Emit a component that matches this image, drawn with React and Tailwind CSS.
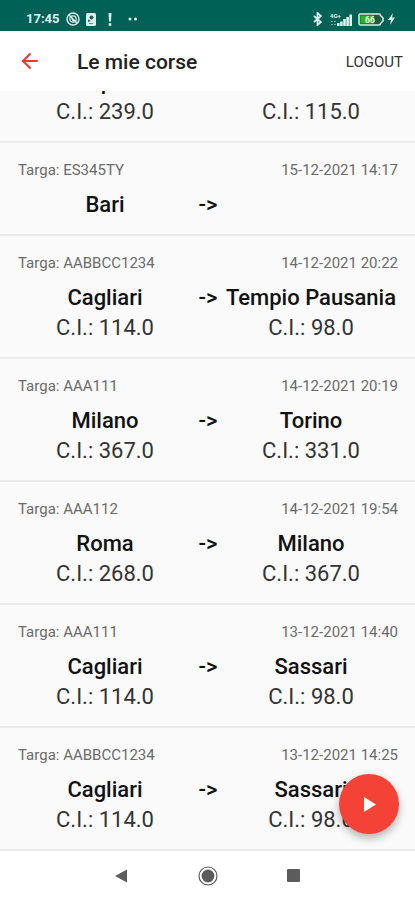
import { ArrowLeft } from "lucide-react";

const rides = [
  { id: 1, plate: "", date: "", from: "Napoli", fromKm: "239.0", to: "", toKm: "115.0" },
  { id: 2, plate: "ES345TY", date: "15-12-2021 14:17", from: "Bari", to: "" },
  { id: 3, plate: "AABBCC1234", date: "14-12-2021 20:22", from: "Cagliari", fromKm: "114.0", to: "Tempio Pausania", toKm: "98.0" },
  { id: 4, plate: "AAA111", date: "14-12-2021 20:19", from: "Milano", fromKm: "367.0", to: "Torino", toKm: "331.0" },
  { id: 5, plate: "AAA112", date: "14-12-2021 19:54", from: "Roma", fromKm: "268.0", to: "Milano", toKm: "367.0" },
  { id: 6, plate: "AAA111", date: "13-12-2021 14:40", from: "Cagliari", fromKm: "114.0", to: "Sassari", toKm: "98.0" },
  { id: 7, plate: "AABBCC1234", date: "13-12-2021 14:25", from: "Cagliari", fromKm: "114.0", to: "Sassari", toKm: "98.0" },
];

function StatusBar() {
  return (
    <div className="flex h-[31px] shrink-0 items-end justify-between bg-[#006156] pr-5 pb-1 pl-[26px] text-[#e0efed]">
      <div className="flex items-center">
        <span className="text-[13px] leading-4 font-bold">17:45</span>
        <svg className="ml-[6px] h-[14px] w-[14px]" viewBox="0 0 14 14" fill="none" stroke="currentColor">
          <circle cx="7" cy="7" r="6" strokeWidth="1.4" />
          <circle cx="7" cy="7" r="3.2" strokeWidth="1.2" />
          <path d="M3 3l8 8M5.5 5.5l2 4" strokeWidth="1.4" />
        </svg>
        <svg className="ml-[6px] h-[13px] w-[10px]" viewBox="0 0 10 13">
          <rect width="10" height="13" rx="1.5" fill="currentColor" />
          <circle cx="5.5" cy="4.5" r="2" fill="#1f5f58" />
          <path d="M2 6.5l3 1.5-3 1z" fill="#1f5f58" />
          <path d="M3 10.5h4" stroke="#5d8f89" />
        </svg>
        <svg className="ml-3 h-[13px] w-[4px]" viewBox="0 0 4 13" fill="currentColor">
          <path d="M.5 0h3L3 8.5H1z" />
          <rect x=".7" y="10.2" width="2.6" height="2.6" />
        </svg>
        <svg className="ml-4 h-[4px] w-[10px]" viewBox="0 0 10 4" fill="currentColor">
          <circle cx="2" cy="2" r="1.5" />
          <circle cx="7.5" cy="2" r="1.5" />
        </svg>
      </div>
      <div className="flex h-4 items-center">
        <svg className="h-[14px] w-[9px]" viewBox="0 0 9 14" fill="none" stroke="currentColor" strokeWidth="1.7">
          <path d="M1 4l7 6-3.5 3V1L8 4l-7 6" />
        </svg>
        <svg className="ml-2 h-[13px] w-[22px]" viewBox="0 0 22 13" fill="currentColor">
          <text x="0" y="5" fontSize="6" fontWeight="700">4G+</text>
          <path d="M1 8h2v1H1zM1 11h2v1H1zM4 8h2v1H4zM4 11h2v1H4z" opacity=".5" />
          <path d="M7 10h2.6v3H7zM10.1 8.5h2.6V13h-2.6zM13.2 6h2.6v7h-2.6zM16.3 4h2.6v9h-2.6zM19.4 1.5H22V13h-2.6z" />
        </svg>
        <svg className="ml-[6px] h-[13px] w-[26px]" viewBox="0 0 26 13">
          <path d="M2.5 1H21q1.500 0 1.500 1.500L25 5v3l-2.500 2.500Q22.500 12 21 12H2.500Q1 12 1 10.500v-8Q1 1 2.500 1z" fill="#1c5a3f" stroke="#dcebe8" strokeWidth="1.6" />
          <path d="M2.5 2.5H16v8H2.5z" fill="#27b51c" />
          <text x="7" y="9.5" fontSize="8.5" fontWeight="700" fill="#effaf0">66</text>
        </svg>
        <svg className="ml-1 h-[12px] w-[7px]" viewBox="0 0 7 12" fill="currentColor">
          <path d="M5 0L0 7h3L2 12l5-7.5H4z" />
        </svg>
      </div>
    </div>
  );
}

function Stop({ city, km }) {
  return (
    <div className="text-center text-[22px] leading-[30px]">
      <p className="min-h-[30px] font-medium whitespace-nowrap text-[#111]">{city}</p>
      {km && <p className="text-[#333]">C.I.: {km}</p>}
    </div>
  );
}

function Ride({ ride }) {
  return (
    <li className="shrink-0 border-b-2 border-[#ebebeb] pt-[15px] pr-[17px] pb-[14px] pl-[18px]">
      <div className="flex min-h-6 justify-between text-[15px] leading-6 text-[#6a6a6a]">
        {ride.plate && <span>Targa: {ride.plate}</span>}
        {ride.date && <time>{ride.date}</time>}
      </div>
      <div className="mt-2 grid grid-cols-[1fr_32px_1fr]">
        <Stop city={ride.from} km={ride.fromKm} />
        <span className="text-center text-[22px] leading-[30px] font-medium text-[#111]">-&gt;</span>
        <Stop city={ride.to} km={ride.toKm} />
      </div>
    </li>
  );
}

function NavBar() {
  return (
    <nav className="grid h-[49px] shrink-0 grid-cols-[1fr_86px_86px_86px_1fr] place-items-center bg-white text-[#5c5c5c]">
      <button aria-label="Indietro" className="col-start-2">
        <svg className="h-[14px] w-[14px]" viewBox="0 0 14 14" fill="currentColor">
          <path d="M12 .5v13L0 7z" />
        </svg>
      </button>
      <button aria-label="Home">
        <svg className="h-5 w-5" viewBox="0 0 20 20">
          <circle cx="10" cy="10" r="9" fill="none" stroke="currentColor" strokeWidth="1.2" />
          <circle cx="10" cy="10" r="6.4" fill="currentColor" />
        </svg>
      </button>
      <button aria-label="Recenti">
        <svg className="h-[13px] w-[13px]" viewBox="0 0 13 13" fill="currentColor">
          <rect width="13" height="13" rx="1" />
        </svg>
      </button>
    </nav>
  );
}

function App() {
  return (
    <div className="flex h-screen flex-col overflow-hidden bg-[#fafafa] font-[Roboto,sans-serif]">
      <StatusBar />
      <header className="flex h-[60px] shrink-0 items-center bg-white pr-3 pl-[18px]">
        <button aria-label="Torna indietro" className="text-[#f5362c]">
          <ArrowLeft size={24} strokeWidth={2} />
        </button>
        <h1 className="ml-[35px] flex-1 pt-[2px] text-[21px] leading-7 font-medium text-[#222]">Le mie corse</h1>
        <button className="pt-[2px] text-[15px] leading-5 text-[#333]">LOGOUT</button>
      </header>
      <main className="relative flex min-h-0 flex-1 flex-col">
        <ul className="flex min-h-0 flex-1 flex-col justify-end overflow-hidden">
          {rides.map((ride) => (
            <Ride key={ride.id} ride={ride} />
          ))}
        </ul>
        <button
          aria-label="Nuova corsa"
          className="absolute right-4 bottom-[17px] flex h-[60px] w-[60px] items-center justify-center rounded-full bg-[#f44336] text-white shadow-[0_4px_8px_rgba(0,0,0,0.3)]"
        >
          <svg className="ml-[2px] h-[15px] w-[12px]" viewBox="0 0 12 15" fill="currentColor">
            <path d="M0 0l12 7.5L0 15z" />
          </svg>
        </button>
      </main>
      <NavBar />
    </div>
  );
}

export default App;
